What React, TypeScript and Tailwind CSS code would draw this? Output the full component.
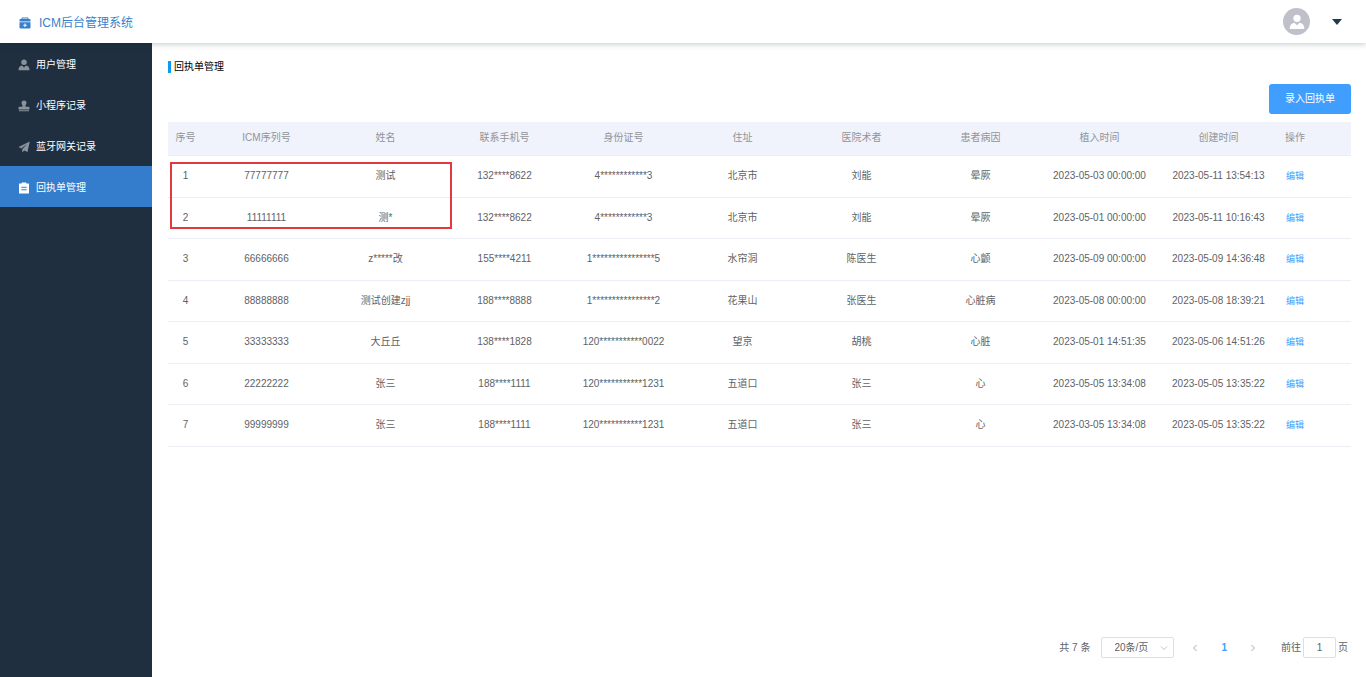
import type { ReactNode } from "react"

type IconProps = { className?: string }

const MedicalBoxIcon = ({ className }: IconProps) => (
  <svg viewBox="0 0 24 24" className={className} aria-hidden="true">
    <path
      fill="currentColor"
      fillRule="evenodd"
      d="M7 1h10a2 2 0 0 1 2 2v1h2a2 2 0 0 1 2 2v3H1V6a2 2 0 0 1 2-2h2V3a2 2 0 0 1 2-2zm0 2v1h10V3zM1 10.500h22V21a2 2 0 0 1-2 2H3a2 2 0 0 1-2-2zm10 2.500v2.500H8.500v2H11V20h2v-2.500h2.500v-2H13V13z"
    />
  </svg>
)

const UserIcon = ({ className }: IconProps) => (
  <svg viewBox="0 0 24 24" className={className} aria-hidden="true">
    <circle cx="12" cy="6.500" r="5.500" fill="currentColor" />
    <path fill="currentColor" d="M8 13l4 4 4-4c5 1 7 4 7 9.500H1C1 17 3 14 8 13z" />
  </svg>
)

const StampIcon = ({ className }: IconProps) => (
  <svg viewBox="0 0 24 24" className={className} aria-hidden="true">
    <path
      fill="currentColor"
      d="M12 1a5 5 0 0 1 5 5c0 2.500-2.500 4-2 7.500h6a2 2 0 0 1 2 2V19H1v-3.500a2 2 0 0 1 2-2h6C9.500 10 7 8.500 7 6a5 5 0 0 1 5-5zM2 20.500h20v2H2z"
    />
  </svg>
)

const PlaneIcon = ({ className }: IconProps) => (
  <svg viewBox="0 0 24 24" className={className} aria-hidden="true">
    <path fill="currentColor" d="M23.500 1L1 12l5.500 3L18 6 8.500 16.500V23l4-4 6.500 3z" />
  </svg>
)

const ClipboardIcon = ({ className }: IconProps) => (
  <svg viewBox="0 0 24 24" className={className} aria-hidden="true">
    <path
      fill="currentColor"
      fillRule="evenodd"
      d="M7.500 1h9v2H21a1 1 0 0 1 1 1v18a1 1 0 0 1-1 1H3a1 1 0 0 1-1-1V4a1 1 0 0 1 1-1h4.500zM6.500 9.500v2h11v-2zm0 5v2h11v-2z"
    />
  </svg>
)

const Chevron = ({ className, d }: IconProps & { d: string }) => (
  <svg viewBox="0 0 8 8" className={className} fill="none" stroke="currentColor" aria-hidden="true">
    <path d={d} />
  </svg>
)

const menu = [
  { label: "用户管理", icon: UserIcon },
  { label: "小程序记录", icon: StampIcon },
  { label: "蓝牙网关记录", icon: PlaneIcon },
  { label: "回执单管理", icon: ClipboardIcon, active: true },
]

const columns = ["ICM序列号", "姓名", "联系手机号", "身份证号", "住址", "医院术者", "患者病因", "植入时间", "创建时间"]

const rows = [
  ["77777777", "测试", "132****8622", "4************3", "北京市", "刘能", "晕厥", "2023-05-03 00:00:00", "2023-05-11 13:54:13"],
  ["11111111", "测*", "132****8622", "4************3", "北京市", "刘能", "晕厥", "2023-05-01 00:00:00", "2023-05-11 10:16:43"],
  ["66666666", "z*****改", "155****4211", "1****************5", "水帘洞", "陈医生", "心颤", "2023-05-09 00:00:00", "2023-05-09 14:36:48"],
  ["88888888", "测试创建zjj", "188****8888", "1****************2", "花果山", "张医生", "心脏病", "2023-05-08 00:00:00", "2023-05-08 18:39:21"],
  ["33333333", "大丘丘", "138****1828", "120***********0022", "望京", "胡桃", "心脏", "2023-05-01 14:51:35", "2023-05-06 14:51:26"],
  ["22222222", "张三", "188****1111", "120***********1231", "五道口", "张三", "心", "2023-05-05 13:34:08", "2023-05-05 13:35:22"],
  ["99999999", "张三", "188****1111", "120***********1231", "五道口", "张三", "心", "2023-03-05 13:34:08", "2023-05-05 13:35:22"],
]

const HeadCell = ({ children, className = "text-center" }: { children: ReactNode; className?: string }) => (
  <th scope="col" className={`font-normal ${className}`}>
    {children}
  </th>
)

const TopBar = () => (
  <header className="relative z-10 flex h-[43px] items-center justify-between bg-white pl-[19px] pr-6 shadow-[0_1px_6px_rgba(0,40,50,0.25)]">
    <div className="flex items-center gap-2 pt-0.5 text-[#3a7fc9]">
      <MedicalBoxIcon className="h-3 w-3" />
      <h1 className="text-xs">ICM后台管理系统</h1>
    </div>
    <button type="button" aria-label="账户菜单" className="flex items-center gap-[22px]">
      <span className="flex h-[27px] w-[27px] items-center justify-center rounded-full bg-[#c0c0ca] text-white">
        <UserIcon className="h-4 w-4" />
      </span>
      <svg viewBox="0 0 10 6" className="h-1.5 w-2.5 text-[#1f3b50]" aria-hidden="true">
        <path fill="currentColor" d="M0 0h10L5 6z" />
      </svg>
    </button>
  </header>
)

const SideBar = () => (
  <nav className="w-[152px] shrink-0 bg-[#1f2f3f]">
    <ul>
      {menu.map((item) => (
        <li key={item.label}>
          <a
            href="#"
            className={`flex h-[41px] items-center gap-1.5 pl-[18px] pt-0.5 text-white ${item.active ? "bg-[#347dcd]" : ""}`}
          >
            <item.icon className={`h-3 w-3 ${item.active ? "text-white" : "text-[#8a929c]"}`} />
            {item.label}
          </a>
        </li>
      ))}
    </ul>
  </nav>
)

const ReceiptTable = () => (
  <div className="relative mt-2">
    <table className="w-full table-fixed border-collapse text-[#606266]">
      <thead className="bg-[#f0f3fc] text-[#909399]">
        <tr className="h-[33px] border-b border-[#ebeef5]">
          <HeadCell className="w-[39px] pr-1 text-center">序号</HeadCell>
          {columns.map((column) => (
            <HeadCell key={column}>{column}</HeadCell>
          ))}
          <HeadCell className="w-[73px] pl-[7px] text-left">操作</HeadCell>
        </tr>
      </thead>
      <tbody>
        {rows.map((row, index) => (
          <tr key={row[0]} className="border-b border-[#ebeef5] odd:h-[42px] even:h-[41px]">
            <td className="pr-1 text-center">{index + 1}</td>
            {row.map((value, i) => (
              <td key={columns[i]} className="whitespace-nowrap text-center">
                {value}
              </td>
            ))}
            <td className="pl-2">
              <a href="#" className="text-[9px] text-[#409eff]">
                编辑
              </a>
            </td>
          </tr>
        ))}
      </tbody>
    </table>
    {/* Highlight over the first two records */}
    <div className="pointer-events-none absolute left-0.5 top-10 h-[67px] w-[282px] border-2 border-[#e03a3e]" />
  </div>
)

const Pagination = () => (
  <div className="mt-auto flex items-center justify-end pr-[3px] text-[#606266]">
    <span className="mr-[11px]">共 7 条</span>
    <div className="relative">
      <select
        aria-label="每页条数"
        className="h-[21px] w-[73px] appearance-none rounded-xs border border-[#dcdfe6] bg-white pl-3"
      >
        <option>20条/页</option>
      </select>
      <Chevron d="M1 2.500l3 3 3-3" className="pointer-events-none absolute right-1.5 top-[7px] h-2 w-2 text-[#c0c4cc]" />
    </div>
    <button type="button" aria-label="上一页" className="ml-[17px] text-[#a8abb2]">
      <Chevron d="M5.500 1l-3 3 3 3" className="h-2 w-2" />
    </button>
    <button type="button" aria-current="page" className="mx-[22px] font-bold text-[#409eff]">
      1
    </button>
    <button type="button" aria-label="下一页" className="mr-6 text-[#a8abb2]">
      <Chevron d="M2.500 1l3 3-3 3" className="h-2 w-2" />
    </button>
    <label className="flex items-center gap-0.5">
      前往
      <input
        type="text"
        defaultValue="1"
        className="h-[21px] w-[33px] rounded-xs border border-[#dcdfe6] bg-white text-center"
      />
      页
    </label>
  </div>
)

const App = () => {
  return (
    <div className="flex min-h-screen flex-col bg-white font-['Liberation_Sans','Noto_Sans_CJK_SC',sans-serif] text-[10px] leading-4">
      <TopBar />
      <div className="flex flex-1">
        <SideBar />
        <main className="flex min-w-0 flex-1 flex-col pb-[19px] pl-4 pr-[15px] pt-4">
          <h2 className="flex items-center gap-[3px] text-black">
            <span className="h-3 w-[3px] bg-[#0a9bf5]" />
            回执单管理
          </h2>
          <button
            type="button"
            className="mt-[9px] h-[30px] w-[82px] self-end rounded-[3px] bg-[#409eff] text-white"
          >
            录入回执单
          </button>
          <ReceiptTable />
          <Pagination />
        </main>
      </div>
    </div>
  )
}

export default App
